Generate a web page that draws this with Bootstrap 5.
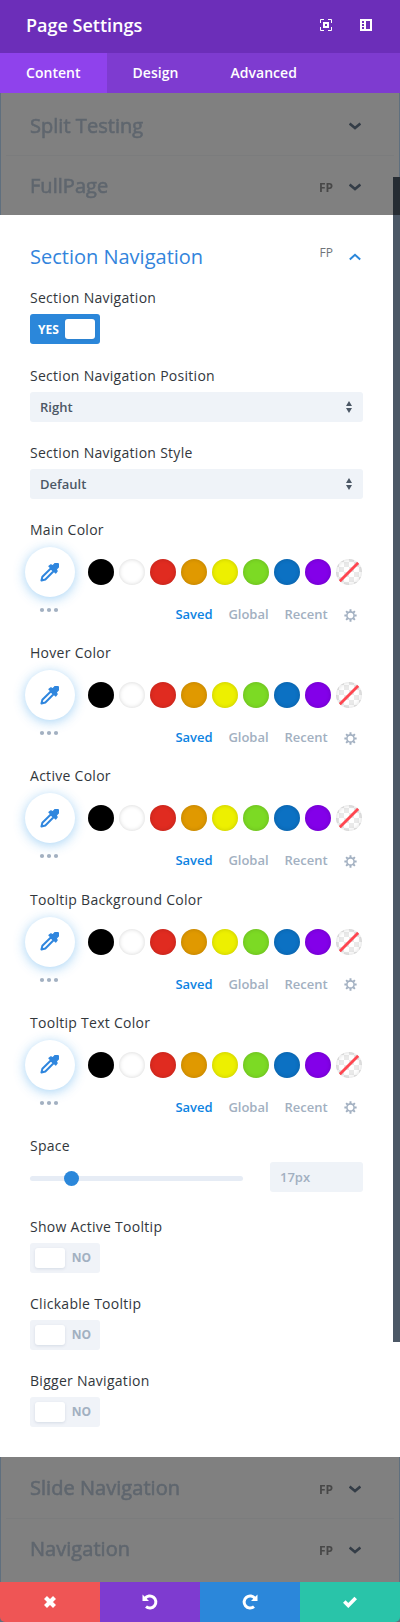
<!DOCTYPE html>
<html lang="en">
<head>
<meta charset="utf-8">
<meta name="viewport" content="width=device-width, initial-scale=1">
<title>Page Settings</title>
<link href="https://cdn.jsdelivr.net/npm/bootstrap@5.3.0/dist/css/bootstrap.min.css" rel="stylesheet">
<style>
body{font-family:"Open Sans",sans-serif;font-size:14px;line-height:20px;color:#32373c;background:#fff;margin:0}
.panel{width:400px;height:1622px;position:relative;overflow:hidden}
.panel-head{height:53px;background:#6c2eb9;padding:0 28px 3px 26px}
.panel-head h1{font-size:18px;font-weight:600;line-height:24px;letter-spacing:0}
.tabs{height:40px;background:#7e3bd0}
.tabs .nav-link{color:#fff;font-weight:600;height:40px;line-height:40px;padding:0 26px;border-radius:0;letter-spacing:.03px}
.tabs .nav-link.active{background:#8f42ec}
.dim{background:#808080;border-left:1px solid #5f6f7e;border-right:1px solid #5f6f7e;padding:0 5px}
.dim-row{padding:0 33px 0 24px}
.dim-row+.dim-row{border-top:1px solid #7b7c7d}
.dim-row>span,.dim-row>div{filter:blur(.7px)}
.dim-title{font-size:20px;line-height:24px;color:#5f666e;letter-spacing:.04px;-webkit-text-stroke:.6px #5f666e}
.fp{font-size:12px;line-height:16px;color:#6f7479}
.dim .fp{font-weight:700;color:#484848}
.sheet{height:1242px;padding:0 37px 0 30px}
.sheet-title{font-size:20px;line-height:28px;color:#3284dc;font-weight:400}
.fld{height:77px}
.fld-label{height:20px;margin-bottom:6px;white-space:nowrap;letter-spacing:.28px}
.switch{width:70px;height:30px;border-radius:3px;background:#f0f3f8;color:#a2b0c1;font-size:12px;font-weight:700;padding:0 9px 0 5px}
.switch.on{background:#2b87da;color:#fff;padding:0 5px 0 8px}
.switch span:not(.knob){padding-top:1px}
.knob{width:30px;height:20px;border-radius:3px;background:#fff;box-shadow:0 1px 3px rgba(60,90,130,.15)}
.pick{height:30px;border-radius:3px;background:#eff3f8;color:#4c5866;font-size:13px;font-weight:600;padding:0 11px 0 10px}
.fld-color{height:123.2px}
.fld-color .fld-label{margin-bottom:7px}
.drop{width:50px;height:50px;border-radius:50%;background:#fff;box-shadow:0 2px 12px rgba(43,150,230,.42);margin-left:-5px;padding-right:1px}
.swatch{width:26px;height:26px;border-radius:50%;box-shadow:inset 0 0 4px rgba(0,0,0,.17);flex:none}
.checker{overflow:hidden;background:conic-gradient(#e9e9e9 25%,#fff 0 50%,#e9e9e9 0 75%,#fff 0) 3px 3px/10px 10px}
.color-links{font-size:13px;font-weight:600;letter-spacing:-.03px;color:#a2b0c1}
.color-links .on{color:#0c83e2}
.track{width:213px;height:5px;border-radius:3px;background:#e6ecf5;margin-top:3px}
.thumb{width:15px;height:15px;border-radius:50%;background:#2b87da;position:absolute;top:-5px}
.scroll{position:absolute;right:0;top:177px;width:7px;height:1165px;background:#4c5866}
.scroll i{display:block;height:38px;background:#262c33}
.foot{height:40px;overflow:hidden;background:#5f6f7e;border-radius:0}
.foot .btn{border-radius:0;border:0;width:100px;padding:0}
.foot .btn:first-child{border-bottom-left-radius:5px}
.foot .btn:last-child{border-bottom-right-radius:5px}
svg{display:block;flex:none}
</style>
</head>
<body>
<svg width="0" height="0" class="position-absolute">
<defs>
<symbol id="dropper" viewBox="0 0 20 20"><path d="M1.500 18.500l1-4L11.600 5.500 14.500 8.400 5.600 17.400Z" fill="none" stroke="#2f86de" stroke-width="2.100" stroke-linejoin="round"/><path d="M9.500 3.400 11.500 2l1.900 1L15.400.9a2.500 2.500 0 0 1 3.700 3.600L17 6.700l1 1.800-1.400 2Z" fill="#2f86de" stroke="#2f86de" stroke-width="1.400" stroke-linejoin="round"/></symbol>
<symbol id="gear" viewBox="0 0 14 14"><circle cx="7" cy="7" r="3.900" fill="none" stroke="#a2b0c1" stroke-width="1.700"/><path d="M7 .4v2.300M7 11.300v2.300M.4 7h2.300M11.300 7h2.300M2.300 2.300l1.700 1.700M10 10l1.700 1.700M2.300 11.700 4 10M10 4l1.700-1.700" stroke="#a2b0c1" stroke-width="2.100"/></symbol>
<symbol id="down" viewBox="0 0 12 8"><path d="M.6 1.500l5.400 4.500 5.400-4.500" fill="none" stroke="#343d47" stroke-width="2.600"/></symbol>
<symbol id="sort" viewBox="0 0 6 12"><path d="M0 5 3 0l3 5ZM0 7h6l-3 5Z" fill="#4c5866"/></symbol>
</defs>
</svg>
<main class="panel d-flex flex-column">
<header class="panel-head d-flex align-items-center text-white">
<h1 class="m-0 me-auto">Page Settings</h1>
<svg width="12" height="12" viewBox="0 0 12 12" style="margin-right:28px"><path d="M.5 4V.5H4M8 .5h3.500V4M11.500 8v3.500H8M4 11.500H.5V8" fill="none" stroke="#fff"/><path d="M4 4h4v4H4Z" fill="none" stroke="#fff" stroke-width="2"/></svg>
<svg width="12" height="12" viewBox="0 0 12 12"><path fill="#fff" fill-rule="evenodd" d="M0 0h12v12H0ZM6 2h4v8H6ZM2 2h2v2H2ZM2 5h2v2H2ZM2 8h2v2H2Z"/></svg>
</header>
<nav class="nav nav-pills tabs flex-nowrap"><a class="nav-link active">Content</a><a class="nav-link">Design</a><a class="nav-link">Advanced</a></nav>
<section class="dim" style="height:122px">
<div class="dim-row d-flex align-items-center" style="height:62px"><span class="dim-title me-auto pt-1">Split Testing</span><div class="pt-1"><svg width="12" height="8"><use href="#down"/></svg></div></div>
<div class="dim-row d-flex align-items-center" style="height:60px"><span class="dim-title me-auto">FullPage</span><span class="fp pt-1">FP</span><div style="margin:2px 0 0 16px"><svg width="12" height="8"><use href="#down"/></svg></div></div>
</section>
<section class="sheet" id="sheet">
<div class="d-flex justify-content-between" style="height:73px;padding-top:28px"><h2 class="sheet-title m-0">Section Navigation</h2><div class="d-flex" style="padding-right:2px"><span class="fp" style="padding-top:2px">FP</span><svg width="12" height="8" viewBox="0 0 12 8" style="margin:10px 0 0 16px"><path d="M.8 6.500 6 1.800l5.200 4.700" fill="none" stroke="#2b87da" stroke-width="2"/></svg></div></div>
<div class="fld" style="height:78px"><div class="fld-label">Section Navigation</div><div class="switch on d-flex align-items-center justify-content-between"><span>YES</span><span class="knob"></span></div></div>
<div class="fld"><div class="fld-label">Section Navigation Position</div><div class="pick d-flex align-items-center justify-content-between"><span>Right</span><svg width="6" height="12"><use href="#sort"/></svg></div></div>
<div class="fld"><div class="fld-label">Section Navigation Style</div><div class="pick d-flex align-items-center justify-content-between"><span>Default</span><svg width="6" height="12"><use href="#sort"/></svg></div></div>
<div id="colors"></div>
<div class="fld" style="height:81px"><div class="fld-label">Space</div><div class="d-flex align-items-center justify-content-between"><div class="track position-relative"><span class="thumb" style="left:34px"></span></div><div class="pick d-flex align-items-center" style="width:93px;color:#a2b0c1">17px</div></div></div>
<div class="fld"><div class="fld-label">Show Active Tooltip</div><div class="switch d-flex align-items-center justify-content-between"><span class="knob"></span><span>NO</span></div></div>
<div class="fld"><div class="fld-label">Clickable Tooltip</div><div class="switch d-flex align-items-center justify-content-between"><span class="knob"></span><span>NO</span></div></div>
<div class="fld"><div class="fld-label">Bigger Navigation</div><div class="switch d-flex align-items-center justify-content-between"><span class="knob"></span><span>NO</span></div></div>
</section>
<section class="dim" style="height:125px">
<div class="dim-row d-flex align-items-center" style="height:61px"><span class="dim-title me-auto">Slide Navigation</span><span class="fp pt-1">FP</span><div style="margin:2px 0 0 16px"><svg width="12" height="8"><use href="#down"/></svg></div></div>
<div class="dim-row d-flex align-items-center" style="height:61px"><span class="dim-title me-auto">Navigation</span><span class="fp pt-1">FP</span><div style="margin:2px 0 0 16px"><svg width="12" height="8"><use href="#down"/></svg></div></div>
</section>
<footer class="foot d-flex">
<button class="btn d-flex align-items-center justify-content-center" style="background:#ef5555" aria-label="Discard"><svg width="14" height="14" viewBox="0 0 14 14"><path d="M2.500 2.500l9 9M11.500 2.500l-9 9" stroke="#fff" stroke-width="4.200"/></svg></button>
<button class="btn d-flex align-items-center justify-content-center" style="background:#7e3bd0" aria-label="Undo"><svg width="16" height="16" viewBox="0 0 16 16"><path d="M3 4.500A6 6 0 1 1 4 12.600" fill="none" stroke="#fff" stroke-width="3"/><path d="M.5.500v6.500H7Z" fill="#fff"/></svg></button>
<button class="btn d-flex align-items-center justify-content-center" style="background:#2b87da" aria-label="Redo"><svg width="16" height="16" viewBox="0 0 16 16"><g transform="matrix(-1 0 0 1 16 0)"><path d="M3 4.500A6 6 0 1 1 4 12.600" fill="none" stroke="#fff" stroke-width="3"/><path d="M.5.500v6.500H7Z" fill="#fff"/></g></svg></button>
<button class="btn d-flex align-items-center justify-content-center" style="background:#29c4a9" aria-label="Save"><svg width="14" height="12" viewBox="0 0 14 12"><path d="M1.300 5.500l4 4L12.700 2" fill="none" stroke="#fff" stroke-width="3.600"/></svg></button>
</footer>
<div class="scroll"><i></i></div>
</main>
<script>
const swatches=['#000','#fff','#e02b20','#e09900','#edf000','#7cda24','#0c71c3','#8300e9'];
document.getElementById('colors').innerHTML=['Main Color','Hover Color','Active Color','Tooltip Background Color','Tooltip Text Color'].map(name=>`
<div class="fld-color"><div class="fld-label">${name}</div>
<div class="d-flex align-items-center"><div class="drop d-flex align-items-center justify-content-center flex-shrink-0"><svg width="19" height="19"><use href="#dropper"/></svg></div>
<div class="d-flex" style="gap:5px;margin-left:13px">${swatches.map(c=>`<span class="swatch" style="background:${c}"></span>`).join('')}<span class="swatch checker"><svg width="26" height="26" viewBox="0 0 26 26"><path d="M3.500 22.500 22.500 3.500" stroke="#ff4650" stroke-width="2.900"/></svg></span></div></div>
<div class="d-flex color-links" style="height:36px"><svg width="20" height="6" style="margin:10px 0 0 9px"><g fill="#a2b0c1"><circle cx="3" cy="3" r="2.100"/><circle cx="10" cy="3" r="2.100"/><circle cx="17" cy="3" r="2.100"/></g></svg>
<div class="d-flex ms-auto" style="padding:7px 6.500px 0 0;gap:16px"><span class="on">Saved</span><span>Global</span><span>Recent</span><svg width="13" height="13" style="margin-top:4.500px"><use href="#gear"/></svg></div></div></div>`).join('');
</script>
<script src="https://cdn.jsdelivr.net/npm/bootstrap@5.3.0/dist/js/bootstrap.bundle.min.js"></script>
</body>
</html>
